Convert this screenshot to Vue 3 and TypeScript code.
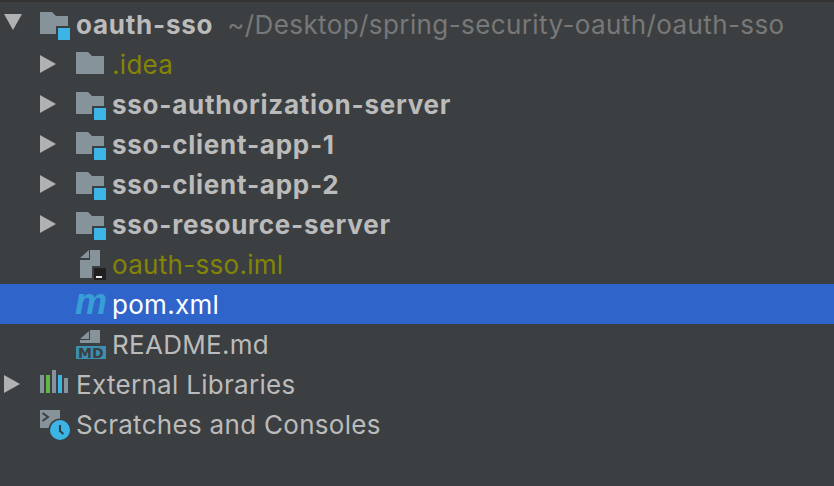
<script setup lang="ts">
interface Row {
  name: string
  depth: number
  arrow?: 'open' | 'closed'
  icon: 'module' | 'folder' | 'iml' | 'maven' | 'md' | 'libs' | 'scratch'
  kind?: 'bold' | 'ignored' | 'plain'
  path?: string
  selected?: boolean
}

const rows: Row[] = [
  { name: 'oauth-sso', depth: 0, arrow: 'open', icon: 'module', kind: 'bold', path: '~/Desktop/spring-security-oauth/oauth-sso' },
  { name: '.idea', depth: 1, arrow: 'closed', icon: 'folder', kind: 'ignored' },
  { name: 'sso-authorization-server', depth: 1, arrow: 'closed', icon: 'module', kind: 'bold' },
  { name: 'sso-client-app-1', depth: 1, arrow: 'closed', icon: 'module', kind: 'bold' },
  { name: 'sso-client-app-2', depth: 1, arrow: 'closed', icon: 'module', kind: 'bold' },
  { name: 'sso-resource-server', depth: 1, arrow: 'closed', icon: 'module', kind: 'bold' },
  { name: 'oauth-sso.iml', depth: 1, icon: 'iml', kind: 'ignored' },
  { name: 'pom.xml', depth: 1, icon: 'maven', selected: true },
  { name: 'README.md', depth: 1, icon: 'md' },
  { name: 'External Libraries', depth: 0, arrow: 'closed', icon: 'libs' },
  { name: 'Scratches and Consoles', depth: 0, icon: 'scratch' },
]
</script>

<template>
  <div class="tree">
    <div
      v-for="row in rows"
      :key="row.name"
      class="row"
      :class="[`depth-${row.depth}`, { selected: row.selected }]"
    >
      <span class="arrow">
        <svg v-if="row.arrow === 'open'" class="open" width="18" height="16" viewBox="0 0 18 16"><path d="M0 0H18L9 16Z" fill="#afb1b3" /></svg>
        <svg v-else-if="row.arrow === 'closed'" width="16" height="18" viewBox="0 0 16 18"><path d="M0 0L16 9L0 18Z" fill="#afb1b3" /></svg>
      </span>
      <svg class="icon" width="36" height="36" viewBox="0 0 36 36">
        <template v-if="row.icon === 'module' || row.icon === 'folder'">
          <path d="M0 4H12L16 8H28V26H0Z" fill="#87939a" />
          <template v-if="row.icon === 'module'">
            <rect x="16" y="18" width="14" height="14" fill="#3c3f41" />
            <rect x="18" y="20" width="12" height="12" fill="#3cb4e5" />
          </template>
        </template>
        <template v-else-if="row.icon === 'iml'">
          <path d="M4 10L13 2V10Z" fill="#87939a" />
          <path d="M14 2H24V19H17V30H4V12H14Z" fill="#87939a" />
          <rect x="16" y="18" width="14" height="14" fill="#3c3f41" />
          <rect x="18" y="20" width="12" height="12" fill="#231f20" />
          <rect x="20" y="28" width="6" height="2" fill="#e8e8e8" />
        </template>
        <template v-else-if="row.icon === 'maven'">
          <text x="-1" y="26" class="maven">m</text>
        </template>
        <template v-else-if="row.icon === 'md'">
          <path d="M4 11L13 3V11Z" fill="#87939a" />
          <path d="M14 2H24V15H4V12H14Z" fill="#87939a" />
          <rect x="0" y="18" width="30" height="13" fill="#3d8fb0" />
          <text x="2" y="30" class="md">MD</text>
        </template>
        <template v-else-if="row.icon === 'libs'">
          <rect x="0" y="7" width="4" height="18" fill="#87939a" />
          <rect x="6" y="7" width="4" height="18" fill="#62b543" />
          <rect x="12" y="2" width="4" height="23" fill="#87939a" />
          <rect x="18" y="7" width="4" height="18" fill="#3cb4e5" />
          <rect x="24" y="10" width="4" height="15" fill="#87939a" />
        </template>
        <template v-else>
          <rect x="0" y="2" width="20" height="18" fill="#87939a" />
          <path d="M2.5 5L8 9L2.5 13" fill="none" stroke="#3c3f41" stroke-width="2" />
          <circle cx="20" cy="22" r="11.5" fill="#3c3f41" />
          <circle cx="20" cy="22" r="10" fill="#3cb4e5" />
          <path d="M20 17V23L23.5 26" fill="none" stroke="#2f3d45" stroke-width="2" />
        </template>
      </svg>
      <span class="label" :class="row.kind">{{ row.name }}</span>
      <span v-if="row.path" class="path">{{ row.path }}</span>
    </div>
  </div>
</template>

<style>
html, body { margin: 0; background: #3c3f41; }
</style>

<style scoped>
.tree {
  width: 834px;
  height: 486px;
  box-sizing: border-box;
  background: #3c3f41;
  border-top: 2px solid #323232;
  padding-top: 2px;
  font-family: Inter, "Liberation Sans", sans-serif;
  font-size: 26px;
  letter-spacing: 0.3px;
  color: #bbbbbb;
  overflow: hidden;
}
.row {
  display: flex;
  align-items: center;
  height: 40px;
  white-space: nowrap;
}
.depth-0 { padding-left: 4px; }
.depth-1 { padding-left: 40px; }
.arrow {
  flex: none;
  width: 36px;
  display: flex;
  align-items: center;
}
.arrow svg { display: block; }
.arrow .open { margin-bottom: 4px; }
.icon {
  flex: none;
  display: block;
  overflow: visible;
  margin-top: 4px;
}
.label.bold { font-weight: 700; letter-spacing: 0.75px; }
.label.ignored { color: #848504; }
.path { margin-left: 14px; color: #787878; letter-spacing: 0.4px; }
.selected { background: #2f65ca; color: #ffffff; }
.maven {
  font-family: "Liberation Sans", sans-serif;
  font-size: 36px;
  font-weight: 700;
  font-style: italic;
  letter-spacing: 0;
  fill: #389fd6;
}
.md {
  font-family: "DejaVu Sans", sans-serif;
  font-size: 14px;
  font-weight: 700;
  letter-spacing: 0;
  fill: #3c3f41;
}
</style>
